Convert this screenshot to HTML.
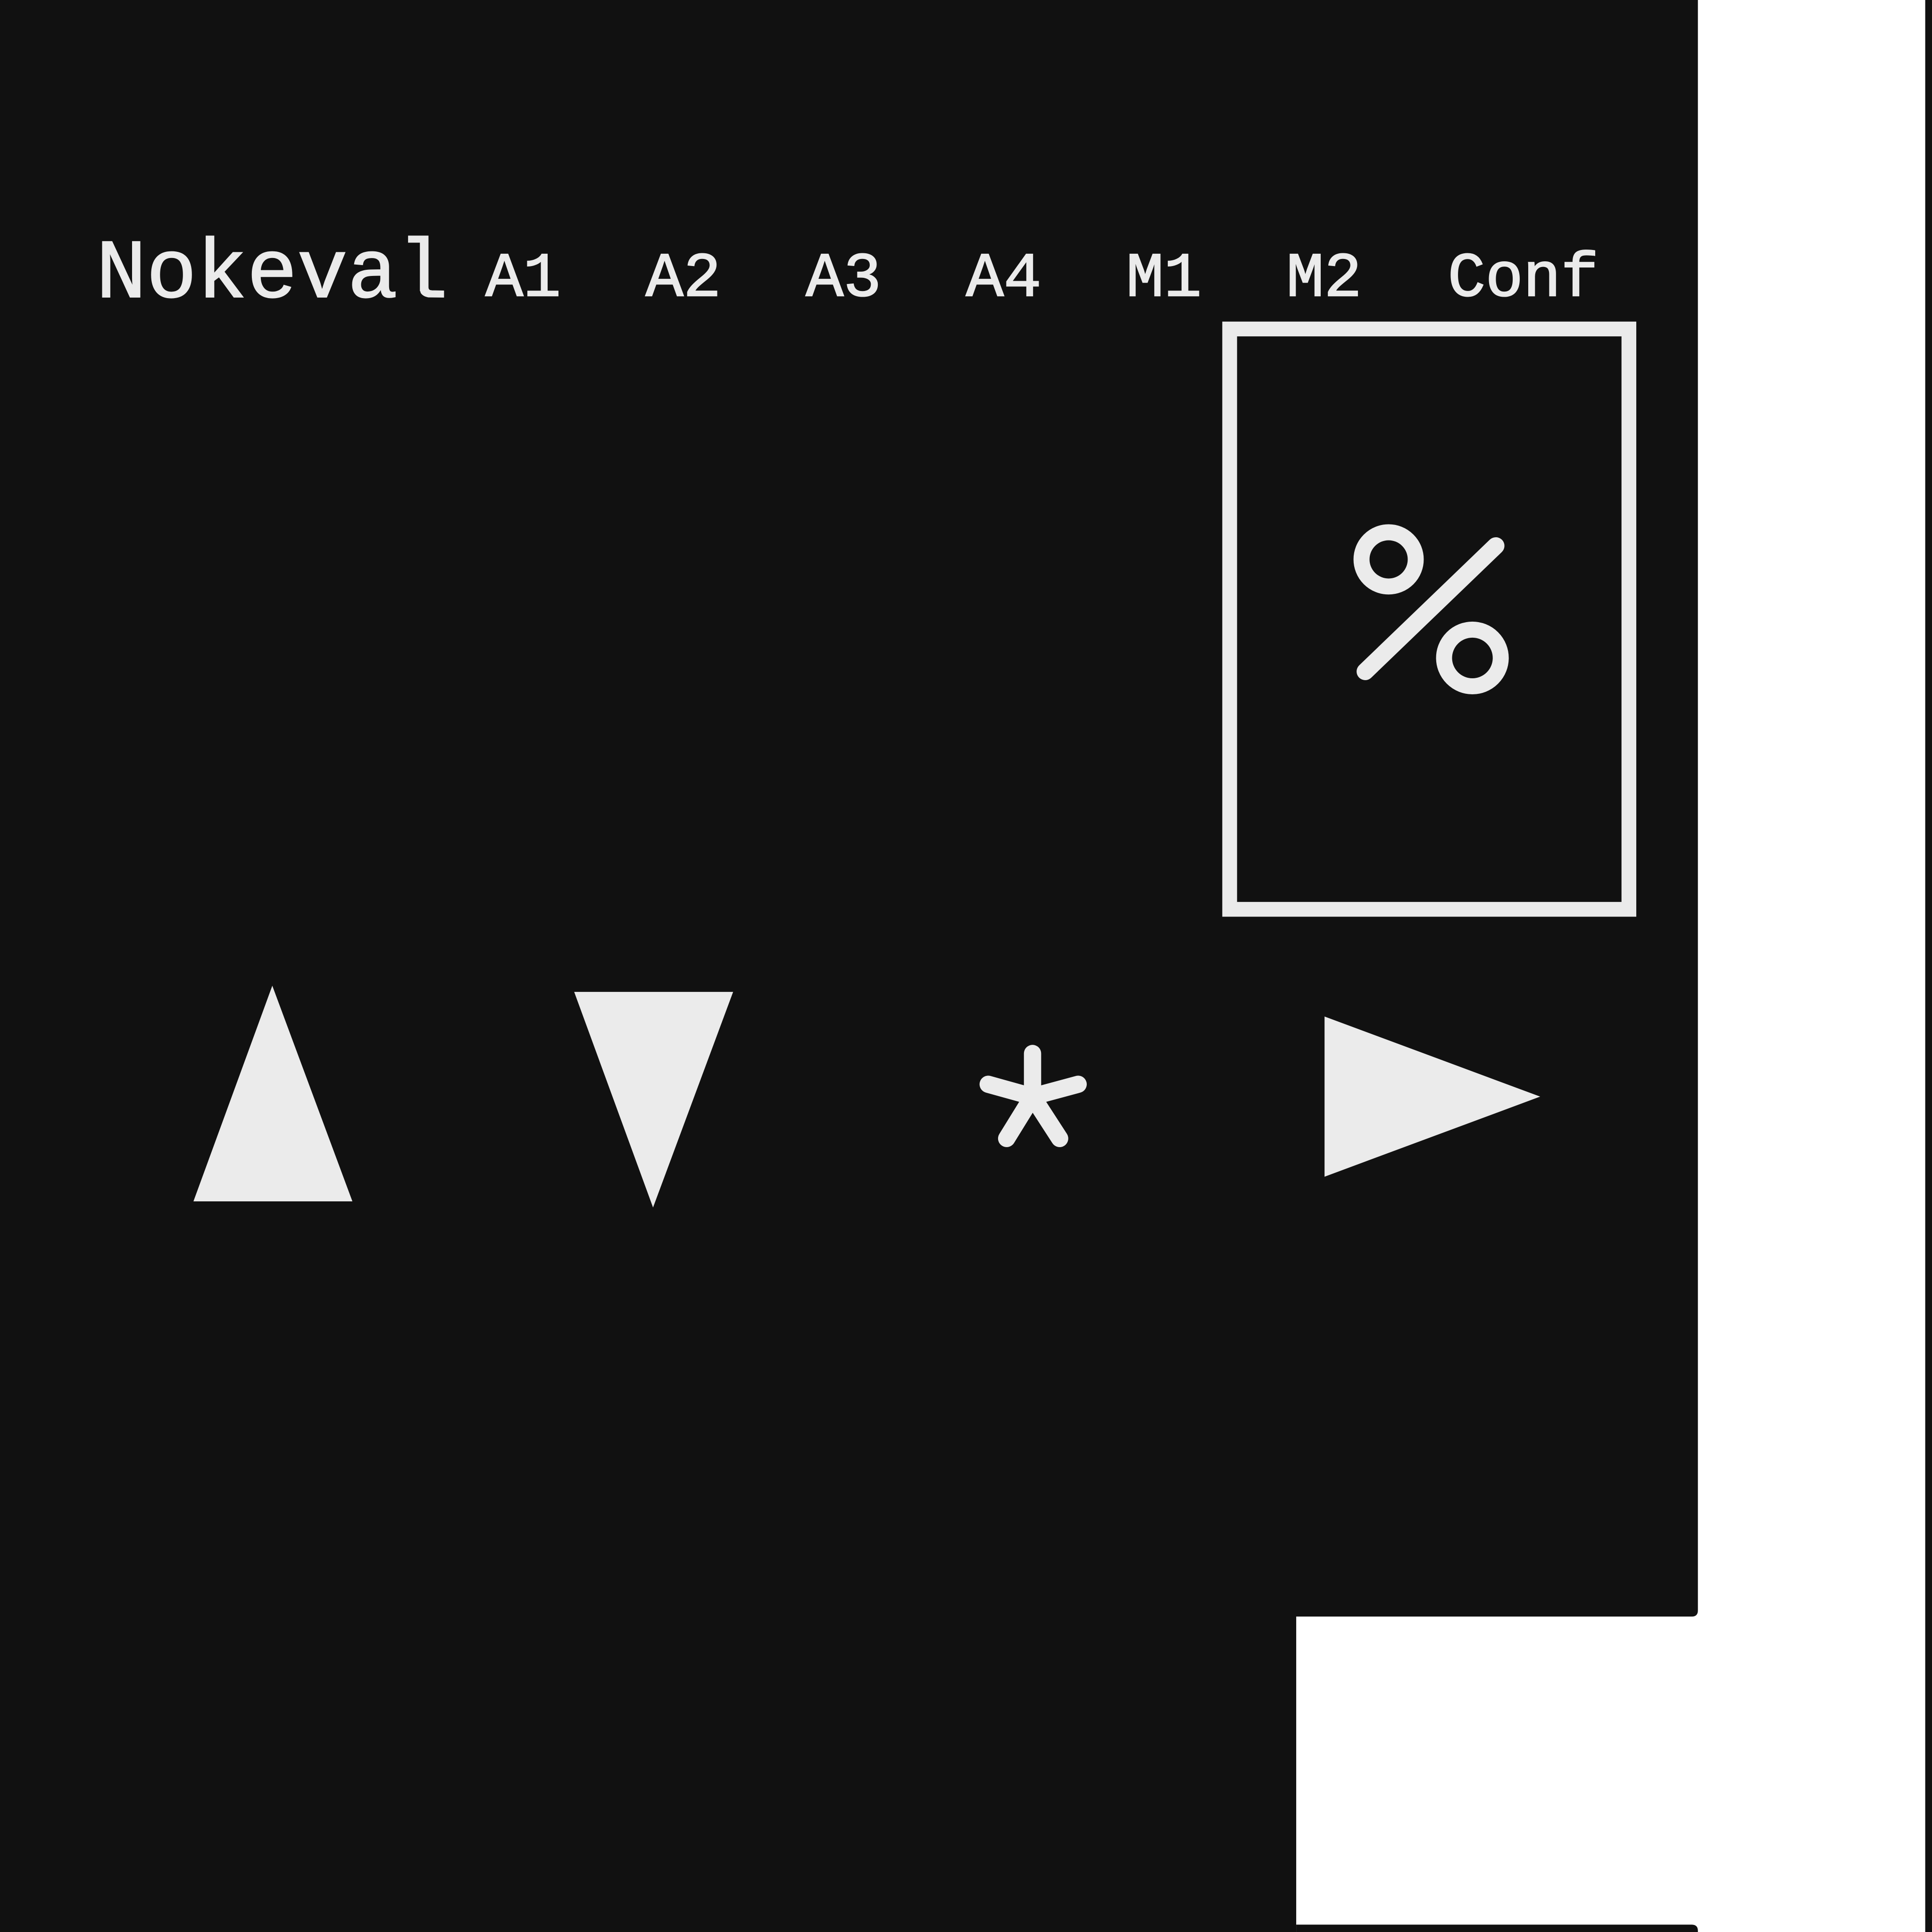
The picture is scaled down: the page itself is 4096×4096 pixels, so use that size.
<!DOCTYPE html>
<html><head><meta charset="utf-8"><style>
html,body{margin:0;padding:0;background:#fff;}
svg{display:block}
</style></head><body>
<svg width="4096" height="4096" viewBox="0 0 1568 1568" xmlns="http://www.w3.org/2000/svg">
<rect x="0" y="0" width="1568" height="1568" fill="#fff"/>
<path d="M0 0H1378V1307Q1378 1312 1373 1312H1052V1568H0Z" fill="#111"/>
<path d="M1052 1562H1373Q1378 1562 1378 1567V1568H1052Z" fill="#111"/>
<rect x="1562.5" y="0" width="6" height="1568" fill="#111"/>
<g fill="#ebebeb" stroke="#ebebeb" stroke-width="1" font-family="Liberation Mono, monospace">
<text x="78" y="241" font-size="68">Nokeval</text>
<text x="394" y="240" font-size="51">A1</text>
<text x="524" y="240" font-size="51">A2</text>
<text x="654" y="240" font-size="51">A3</text>
<text x="784" y="240" font-size="51">A4</text>
<text x="914" y="240" font-size="51">M1</text>
<text x="1044" y="240" font-size="51">M2</text>
<text x="1175" y="240" font-size="51">Conf</text>
</g>
<rect x="998" y="267" width="324" height="471" fill="none" stroke="#ebebeb" stroke-width="12"/>
<g fill="none" stroke="#ebebeb">
<circle cx="1127" cy="454" r="22" stroke-width="13"/>
<circle cx="1195" cy="534" r="23" stroke-width="13"/>
<line x1="1108" y1="545" x2="1214" y2="443" stroke-width="14" stroke-linecap="round"/>
</g>
<g fill="#ebebeb">
<polygon points="221,800 157,975 286,975"/>
<polygon points="466,805 595,805 530,980"/>
<polygon points="1075,825 1250,890 1075,955"/>
</g>
<g stroke="#ebebeb" stroke-width="14" stroke-linecap="round">
<line x1="838" y1="890" x2="838" y2="855"/>
<line x1="838" y1="890" x2="802" y2="880"/>
<line x1="838" y1="890" x2="875" y2="880"/>
<line x1="838" y1="890" x2="817" y2="924"/>
<line x1="838" y1="890" x2="860" y2="924"/>
</g>
</svg>
</body></html>
